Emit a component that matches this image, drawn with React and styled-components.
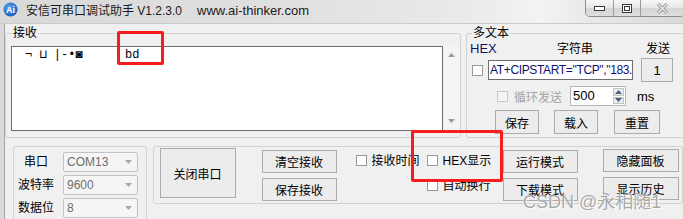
import styled, { createGlobalStyle } from "styled-components";

// 전역 스타일
const GlobalStyle = createGlobalStyle`
  html, body {
    margin: 0;
    padding: 0;
    background: #f0f0f0;
    overflow: hidden;
  }
  body {
    font-family: "Liberation Sans", "Noto Sans CJK SC", sans-serif;
    font-size: 12px;
    color: #000000;
  }
  * {
    box-sizing: border-box;
  }
`;

const Window = styled.div`
  position: relative;
  width: 683px;
  height: 219px;
  overflow: hidden;
  display: flex;
  flex-direction: column;
  background: #f0f0f0;
`;

// 타이틀 바
const TitleBar = styled.div`
  height: 24px;
  flex: none;
  display: flex;
  align-items: flex-start;
  background: linear-gradient(90deg, #d9d9d9 0%, #dfdfdf 40%, #eaeaea 68%, #f3f3f3 79%, #e4e4e4 90%, #d9d9d9 100%);
  border-bottom: 1px solid #cacaca;
`;
const Logo = styled.svg`
  margin: 2px 0 0 3px;
  flex: none;
`;
const TitleText = styled.div`
  margin: 4px 0 0 8px;
  line-height: 14px;
  font-size: 12px;
  color: #1b1b1b;
  white-space: nowrap;
`;
const TitleUrl = styled.span`
  margin-left: 15px;
  font-size: 13px;
`;
const ControlBox = styled.div`
  margin-left: auto;
  margin-right: -2px;
  display: flex;
  height: 17px;
  border: 1px solid #8c8c8c;
  border-top: none;
  border-radius: 0 0 5px 5px;
  overflow: hidden;
`;
const CtrlButton = styled.div`
  width: ${(p) => p.$w}px;
  display: flex;
  align-items: center;
  justify-content: center;
  background: linear-gradient(#f7f7f7, #e6e6e6 50%, #d5d5d5 51%, #dedede);
  & + & {
    border-left: 1px solid #9c9c9c;
  }
`;

// 본문
const Body = styled.div`
  flex: 1;
  display: flex;
  flex-direction: column;
  box-shadow: inset 4px 0 #d9d9d9, inset 5px 0 #a8a8a8;
`;
const TopRow = styled.div`
  display: flex;
  align-items: flex-start;
  height: 114px;
`;
const Group = styled.fieldset`
  margin: 2px 0 0 ${(p) => p.$ml}px;
  width: ${(p) => p.$w}px;
  height: 112px;
  min-width: 0;
  padding: 0 0 0 ${(p) => p.$pl}px;
  border: 1px solid #d2d2d2;
  border-radius: 3px;
  flex: none;
`;
const Legend = styled.legend`
  margin-left: ${(p) => p.$ml}px;
  padding: 0 1px;
  font-size: 12px;
  line-height: 14px;
`;
const ReceiveRow = styled.div`
  display: flex;
  margin-top: 6px;
`;
const ReceiveText = styled.div`
  width: 432px;
  height: 85px;
  border: 1px solid #6e6e6e;
  background: #ffffff;
  padding: 1px 0 0 13px;
  font-family: "Liberation Mono", "DejaVu Sans Mono", monospace;
  font-size: 12px;
  line-height: 14px;
  white-space: pre;
`;
const GlyphRun = styled.span`
  display: inline-block;
  width: 100px;
`;
const ScrollBar = styled.div`
  width: 15px;
  height: 85px;
  margin-left: 1px;
  background: #f4f4f4;
  display: flex;
  flex-direction: column;
  justify-content: space-between;
  align-items: center;
  padding: 7px 0 8px;
`;

// 다중 텍스트
const HeaderRow = styled.div`
  margin-top: 2px;
  display: grid;
  grid-template-columns: 87px 89px auto;
  line-height: 14px;
`;
const HexLabel = styled.span`
  font-size: 13px;
  color: #101070;
`;
const LineRow = styled.div`
  display: flex;
  align-items: center;
  margin-top: ${(p) => p.$mt}px;
  height: ${(p) => p.$h}px;
`;
const CheckBox = styled.span`
  flex: none;
  width: 11px;
  height: 11px;
  margin-left: ${(p) => p.$ml || 0}px;
  border: 1px solid ${(p) => (p.$disabled ? "#c9c9c9" : "#9a9a9a")};
  background: ${(p) => (p.$disabled ? "#f4f4f4" : "#ffffff")};
`;
const TextInput = styled.div`
  margin-left: 5px;
  width: 145px;
  height: 20px;
  border: 1px solid #6e6e6e;
  background: #ffffff;
  padding: 0 0 0 1px;
  font-size: 12px;
  line-height: 18px;
  letter-spacing: -0.35px;
  color: #101070;
  white-space: nowrap;
  overflow: hidden;
`;
const Button = styled.div`
  flex: none;
  width: ${(p) => p.$w}px;
  height: ${(p) => p.$h}px;
  margin-left: ${(p) => p.$ml || 0}px;
  border: 1px solid #acacac;
  background: #ececec;
  display: flex;
  align-items: center;
  justify-content: center;
  font-size: ${(p) => p.$fs || 12}px;
`;
const DimLabel = styled.span`
  margin-left: 6px;
  width: 48px;
  color: #a3a3a3;
`;
const Spin = styled.div`
  margin-left: 8px;
  width: 56px;
  height: 20px;
  border: 1px solid #b5b5b5;
  background: #ffffff;
  display: flex;
  align-items: stretch;
`;
const SpinValue = styled.span`
  flex: 1;
  padding-left: 2px;
  font-size: 13px;
  line-height: 18px;
`;
const SpinButtons = styled.div`
  width: 13px;
  display: flex;
  flex-direction: column;
  gap: 1px;
  padding: 1px;
`;
const SpinBtn = styled.div`
  flex: 1;
  border: 1px solid #c4c4c4;
  background: #ebebeb;
  display: flex;
  align-items: center;
  justify-content: center;
`;
const Unit = styled.span`
  margin-left: 11px;
  font-size: 13px;
`;

// 하단 영역
const BottomRow = styled.div`
  display: flex;
  align-items: flex-start;
  margin-top: 8px;
`;
const SerialGroup = styled.div`
  margin-left: 13px;
  width: 136px;
  height: 90px;
  border: 1px solid #d2d2d2;
  border-radius: 3px;
  padding: 5px 0 0 0;
  display: grid;
  grid-template-columns: 44px 75px;
  grid-auto-rows: 20px;
  column-gap: 5px;
  row-gap: 3px;
  align-items: center;
`;
const FieldLabel = styled.span`
  text-align: center;
  font-size: 12px;
  line-height: 14px;
`;
const Combo = styled.div`
  height: 20px;
  border: 1px solid #c3c3c3;
  border-radius: 2px;
  background: #f5f5f5;
  display: flex;
  align-items: center;
  justify-content: space-between;
  padding: 0 5px 0 3px;
  color: #6e6e6e;
  font-size: 12px;
`;
const ControlGroup = styled.div`
  margin-left: 6px;
  width: 540px;
  height: 58px;
  border: 1px solid #d2d2d2;
  border-radius: 3px;
  padding: 1px 0 0 6px;
  display: flex;
  align-items: flex-start;
`;
const ButtonColumn = styled.div`
  display: flex;
  flex-direction: column;
  gap: 5px;
  margin-top: ${(p) => p.$mt}px;
  margin-left: ${(p) => p.$ml}px;
`;
const OptionGrid = styled.div`
  margin: 7px 0 0 19px;
  display: grid;
  grid-template-columns: 71px 76px;
  grid-auto-rows: 25px;
`;
const Option = styled.div`
  grid-column: ${(p) => p.$col || "auto"};
  display: flex;
  align-items: flex-start;
  height: 14px;
`;
const OptionText = styled.span`
  margin-left: 5px;
  line-height: 12px;
  white-space: nowrap;
`;

// 겹치는 요소
const Highlight = styled.div`
  position: absolute;
  left: ${(p) => p.$x}px;
  top: ${(p) => p.$y}px;
  width: ${(p) => p.$w}px;
  height: ${(p) => p.$h}px;
  border: 3px solid #f51d1d;
  border-radius: 2px;
`;
const Watermark = styled.div`
  position: absolute;
  left: 523px;
  top: 192px;
  font-size: 18px;
  line-height: 20px;
  color: rgba(140, 140, 140, 0.75);
  text-shadow: 0 0 1px #ffffff, 1px 1px 0 rgba(255, 255, 255, 0.8);
  white-space: nowrap;
`;

const TriDown = ({ color = "#9a9a9a" }) => (
  <svg width="7" height="4" viewBox="0 0 7 4">
    <path d="M0 0H7L3.5 4Z" fill={color} />
  </svg>
);
const TriUp = ({ color = "#9a9a9a" }) => (
  <svg width="7" height="4" viewBox="0 0 7 4">
    <path d="M0 4H7L3.5 0Z" fill={color} />
  </svg>
);

function App() {
  return (
    <Window>
      <GlobalStyle />
      <TitleBar>
        <Logo width="15" height="15" viewBox="0 0 15 15">
          <defs>
            <radialGradient id="lg" cx="40%" cy="35%" r="70%">
              <stop offset="0" stopColor="#5aa6f0" />
              <stop offset="1" stopColor="#1558b8" />
            </radialGradient>
          </defs>
          <circle cx="7.5" cy="7.5" r="7" fill="url(#lg)" />
          <text x="7.5" y="11" textAnchor="middle" fontSize="9" fontWeight="bold" fill="#ffffff" fontFamily="Liberation Sans, sans-serif">
            Ai
          </text>
        </Logo>
        <TitleText>
          安信可串口调试助手 V1.2.3.0
          <TitleUrl>www.ai-thinker.com</TitleUrl>
        </TitleText>
        <ControlBox>
          <CtrlButton $w={27}>
            <svg width="11" height="5" viewBox="0 0 11 5">
              <rect x="0.5" y="0.5" width="10" height="4" fill="#ffffff" stroke="#3a3a3a" />
            </svg>
          </CtrlButton>
          <CtrlButton $w={27}>
            <svg width="10" height="9" viewBox="0 0 10 9">
              <rect x="0.5" y="0.5" width="9" height="8" fill="#ffffff" stroke="#3a3a3a" />
              <rect x="2.5" y="2.5" width="5" height="4" fill="none" stroke="#3a3a3a" />
            </svg>
          </CtrlButton>
          <CtrlButton $w={44}>
            <svg width="13" height="11" viewBox="0 0 13 11">
              <path d="M2 1L11 10M11 1L2 10" stroke="#8c8c8c" strokeWidth="3" />
              <path d="M2 1L11 10M11 1L2 10" stroke="#f2f2f2" strokeWidth="1.2" />
            </svg>
          </CtrlButton>
        </ControlBox>
      </TitleBar>

      <Body>
        <TopRow>
          <Group $ml={5} $w={456} $pl={5}>
            <Legend $ml={1}>接收</Legend>
            <ReceiveRow>
              <ReceiveText>
                <GlyphRun>¬ ⊔ |-•◙</GlyphRun>bd
              </ReceiveText>
              <ScrollBar>
                <TriUp />
                <TriDown />
              </ScrollBar>
            </ReceiveRow>
          </Group>

          <Group $ml={5} $w={230} $pl={3}>
            <Legend $ml={2}>多文本</Legend>
            <HeaderRow>
              <HexLabel>HEX</HexLabel>
              <span>字符串</span>
              <span>发送</span>
            </HeaderRow>
            <LineRow $mt={2} $h={24}>
              <CheckBox $ml={2} />
              <TextInput>AT+CIPSTART="TCP","183.230.40.39",876</TextInput>
              <Button $w={32} $h={24} $ml={8} $fs={13}>1</Button>
            </LineRow>
            <LineRow $mt={4} $h={20}>
              <CheckBox $ml={27} $disabled />
              <DimLabel>循环发送</DimLabel>
              <Spin>
                <SpinValue>500</SpinValue>
                <SpinButtons>
                  <SpinBtn>
                    <TriUp color="#4a5f88" />
                  </SpinBtn>
                  <SpinBtn>
                    <TriDown color="#4a5f88" />
                  </SpinBtn>
                </SpinButtons>
              </Spin>
              <Unit>ms</Unit>
            </LineRow>
            <LineRow $mt={4} $h={24}>
              <Button $w={44} $h={24} $ml={25}>保存</Button>
              <Button $w={44} $h={24} $ml={15}>载入</Button>
              <Button $w={46} $h={24} $ml={16}>重置</Button>
            </LineRow>
          </Group>
        </TopRow>

        <BottomRow>
          <SerialGroup>
            <FieldLabel>串口</FieldLabel>
            <Combo>
              COM13
              <TriDown color="#a8a8a8" />
            </Combo>
            <FieldLabel>波特率</FieldLabel>
            <Combo>
              9600
              <TriDown color="#a8a8a8" />
            </Combo>
            <FieldLabel>数据位</FieldLabel>
            <Combo>
              8
              <TriDown color="#a8a8a8" />
            </Combo>
          </SerialGroup>

          <ControlGroup>
            <Button $w={76} $h={50}>关闭串口</Button>
            <ButtonColumn $mt={2} $ml={26}>
              <Button $w={75} $h={23}>清空接收</Button>
              <Button $w={75} $h={23}>保存接收</Button>
            </ButtonColumn>
            <OptionGrid>
              <Option>
                <CheckBox />
                <OptionText>接收时间</OptionText>
              </Option>
              <Option>
                <CheckBox />
                <OptionText>HEX显示</OptionText>
              </Option>
              <Option $col={2}>
                <CheckBox />
                <OptionText>自动换行</OptionText>
              </Option>
            </OptionGrid>
            <ButtonColumn $mt={2} $ml={0}>
              <Button $w={75} $h={23}>运行模式</Button>
              <Button $w={75} $h={23}>下载模式</Button>
            </ButtonColumn>
            <ButtonColumn $mt={1} $ml={25}>
              <Button $w={76} $h={23}>隐藏面板</Button>
              <Button $w={76} $h={23}>显示历史</Button>
            </ButtonColumn>
          </ControlGroup>
        </BottomRow>
      </Body>

      <Highlight $x={117} $y={31} $w={47} $h={34} />
      <Highlight $x={411} $y={130} $w={92} $h={52} />
      <Watermark>CSDN @永相随1</Watermark>
    </Window>
  );
}

export default App;
